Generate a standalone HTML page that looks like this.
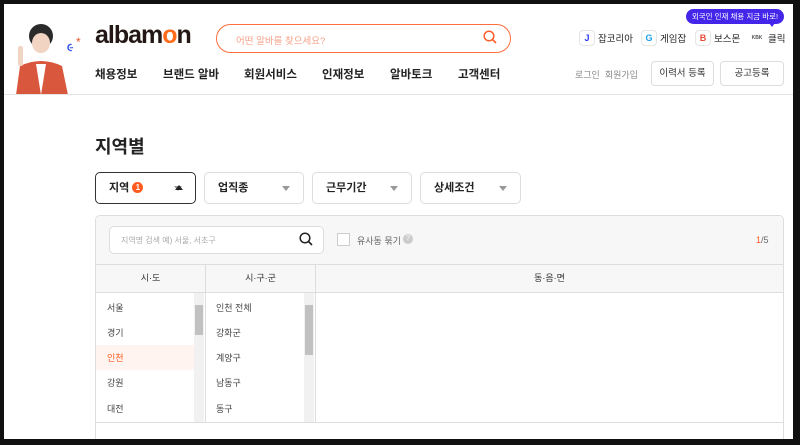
<!DOCTYPE html>
<html><head><meta charset="utf-8"><style>
*{box-sizing:border-box;margin:0;padding:0}
body{width:800px;height:445px;background:#111;font-family:"Liberation Sans","Noto Sans CJK KR",sans-serif;position:relative;overflow:hidden}
.page{position:absolute;left:4px;top:4px;width:789px;height:435px;background:#fff;overflow:hidden}
.w{position:absolute;left:-4px;top:-4px;width:800px;height:445px}
.a{position:absolute}
.nav span{position:absolute;top:66px;font-size:11.5px;font-weight:bold;color:#222}
.ext{position:absolute;top:30px;font-size:9.5px;color:#222;display:flex;align-items:center}
.ext i{display:inline-block;width:16px;height:16px;border:1px solid #e5e5e5;border-radius:4px;margin-right:3px;font-style:normal;font-size:9px;font-weight:bold;text-align:center;line-height:14px}
.btn{position:absolute;top:61px;height:25px;border:1px solid #ddd;border-radius:4px;font-size:9.5px;color:#333;text-align:center;line-height:23px}
.dd{position:absolute;top:172px;height:32px;border:1px solid #ddd;border-radius:5px;font-size:11px;font-weight:bold;color:#222;padding-left:13px;line-height:30px}
.dd:after{content:"";position:absolute;right:13px;top:13px;border:4px solid transparent;border-top:5px solid #999}
.li{position:absolute;font-size:9px;color:#444}
</style></head><body><div class="page"><div class="w">
<svg class="a" style="left:10px;top:18px" width="62" height="77"><circle cx="31" cy="18" r="12" fill="#2a2a2a"/><ellipse cx="31" cy="25" rx="9" ry="10" fill="#f1d4c2"/><path d="M6 77 L10 48 Q31 38 52 48 L58 77Z" fill="#d9573c"/><path d="M26 46 L31 77 L36 46Z" fill="#fff"/><rect x="8" y="28" width="5" height="20" rx="2" fill="#f1d4c2"/></svg>
<div class="a" style="left:76px;top:35px;color:#e8572a;font-size:12px">*</div>
<div class="a" style="left:67px;top:42px;color:#2a4ee8;font-size:11px;font-weight:bold">૯</div>
<div class="a" style="left:95px;top:21px;font-size:25px;font-weight:bold;color:#231815;letter-spacing:-1px">alba<span>m</span><span style="color:#ff6b1a">o</span>n</div>
<div class="a" style="left:216px;top:24px;width:295px;height:29px;border:1.5px solid #ff6e3c;border-radius:15px;font-size:9.5px;color:#f6a38a;padding:8px 0 0 19px">어떤 알바를 찾으세요?</div>
<svg class="a" style="left:483px;top:30px" width="14" height="14"><circle cx="6" cy="6" r="4.8" stroke="#ff5d2a" stroke-width="1.5" fill="none"/><path d="M9.5 9.5 L13 13" stroke="#ff5d2a" stroke-width="1.6"/></svg>
<div class="a" style="left:686px;top:9px;width:98px;height:15px;background:#4426ea;border-radius:8px;color:#fff;font-size:7.5px;text-align:center;line-height:15px">외국인 인재 채용 지금 바로!</div>
<div class="a" style="left:769px;top:23px;border:3px solid transparent;border-top:4px solid #4426ea"></div>
<div class="ext" style="left:579px"><i style="color:#2a3de8">J</i>잡코리아</div>
<div class="ext" style="left:641px"><i style="color:#1e9de8">G</i>게임잡</div>
<div class="ext" style="left:695px"><i style="color:#e84b3a">B</i>보스몬</div>
<div class="ext" style="left:749px"><i style="color:#555;font-size:5px;border-color:#fff">KBK</i>클릭</div>
<div class="nav"><span style="left:95px">채용정보</span><span style="left:163px">브랜드 알바</span><span style="left:244px">회원서비스</span><span style="left:322px">인재정보</span><span style="left:390px">알바토크</span><span style="left:458px">고객센터</span></div>
<div class="a" style="left:575px;top:68px;font-size:9px;color:#888">로그인&nbsp;&nbsp;회원가입</div>
<div class="btn" style="left:651px;width:63px">이력서 등록</div>
<div class="btn" style="left:720px;width:64px">공고등록</div>
<div class="a" style="left:0;top:94px;width:800px;height:1px;background:#e5e5e5"></div>
<div class="a" style="left:95px;top:133px;font-size:18px;font-weight:bold;color:#222">지역별</div>
<div class="dd" style="left:95px;width:101px;top:172px;border-color:#333">지역 <span style="display:inline-block;width:11px;height:11px;border-radius:50%;background:#ff5a1f;color:#fff;font-size:8px;line-height:11px;text-align:center;vertical-align:1px">1</span></div>
<div class="a" style="left:175px;top:181px;border:4px solid transparent;border-bottom:5px solid #222"></div>
<div class="dd" style="left:204px;width:100px">업직종</div>
<div class="dd" style="left:312px;width:100px">근무기간</div>
<div class="dd" style="left:420px;width:101px">상세조건</div>
<div class="a" style="left:95px;top:215px;width:689px;height:240px;border:1px solid #ddd;border-radius:5px;background:#fff"></div>
<div class="a" style="left:96px;top:216px;width:687px;height:76px;background:#f7f7f7;border-radius:5px 5px 0 0"></div>
<div class="a" style="left:96px;top:292px;width:687px;height:131px;border-top:1px solid #ddd;border-bottom:1px solid #ddd"></div>
<div class="a" style="left:96px;top:264px;width:687px;height:1px;background:#ddd"></div>
<div class="a" style="left:109px;top:226px;width:215px;height:28px;background:#fff;border:1px solid #ddd;border-radius:5px;font-size:8px;color:#aaa;padding:8px 0 0 11px">지역명 검색 예) 서울, 서초구</div>
<svg class="a" style="left:299px;top:232px" width="14" height="14"><circle cx="6" cy="6" r="4.8" stroke="#222" stroke-width="1.5" fill="none"/><path d="M9.5 9.5 L13 13" stroke="#222" stroke-width="1.6"/></svg>
<div class="a" style="left:337px;top:233px;width:13px;height:13px;border:1px solid #ccc;background:#fff"></div>
<div class="a" style="left:357px;top:234px;font-size:9px;color:#666">유사동 묶기</div>
<div class="a" style="left:403px;top:234px;width:10px;height:10px;border-radius:50%;background:#ccc;color:#fff;font-size:7px;text-align:center;line-height:10px">?</div>
<div class="a" style="left:756px;top:235px;font-size:9px;color:#666"><span style="color:#ff5a1f">1</span>/5</div>
<div class="a" style="left:205px;top:265px;width:1px;height:158px;background:#ddd"></div>
<div class="a" style="left:315px;top:265px;width:1px;height:158px;background:#ddd"></div>
<div class="a" style="left:96px;top:271px;width:109px;text-align:center;font-size:9px;color:#333">시·도</div>
<div class="a" style="left:206px;top:271px;width:109px;text-align:center;font-size:9px;color:#333">시·구·군</div>
<div class="a" style="left:316px;top:271px;width:467px;text-align:center;font-size:9px;color:#333">동·음·면</div>
<div class="a" style="left:96px;top:345px;width:98px;height:25px;background:#fff4ef"></div>
<div class="a" style="left:194px;top:293px;width:10px;height:129px;background:#f1f1f1"></div>
<div class="a" style="left:195px;top:305px;width:8px;height:30px;background:#c1c1c1"></div>
<div class="a" style="left:304px;top:293px;width:10px;height:129px;background:#f1f1f1"></div>
<div class="a" style="left:305px;top:305px;width:8px;height:50px;background:#c1c1c1"></div>
<div class="li" style="left:107px;top:301px">서울</div><div class="li" style="left:107px;top:326px">경기</div><div class="li" style="left:107px;top:351px;color:#ff5a1f">인천</div><div class="li" style="left:107px;top:376px">강원</div><div class="li" style="left:107px;top:402px">대전</div>
<div class="li" style="left:216px;top:301px">인천 전체</div><div class="li" style="left:216px;top:326px">강화군</div><div class="li" style="left:216px;top:351px">계양구</div><div class="li" style="left:216px;top:376px">남동구</div><div class="li" style="left:216px;top:402px">동구</div>
</div></div></body></html>
